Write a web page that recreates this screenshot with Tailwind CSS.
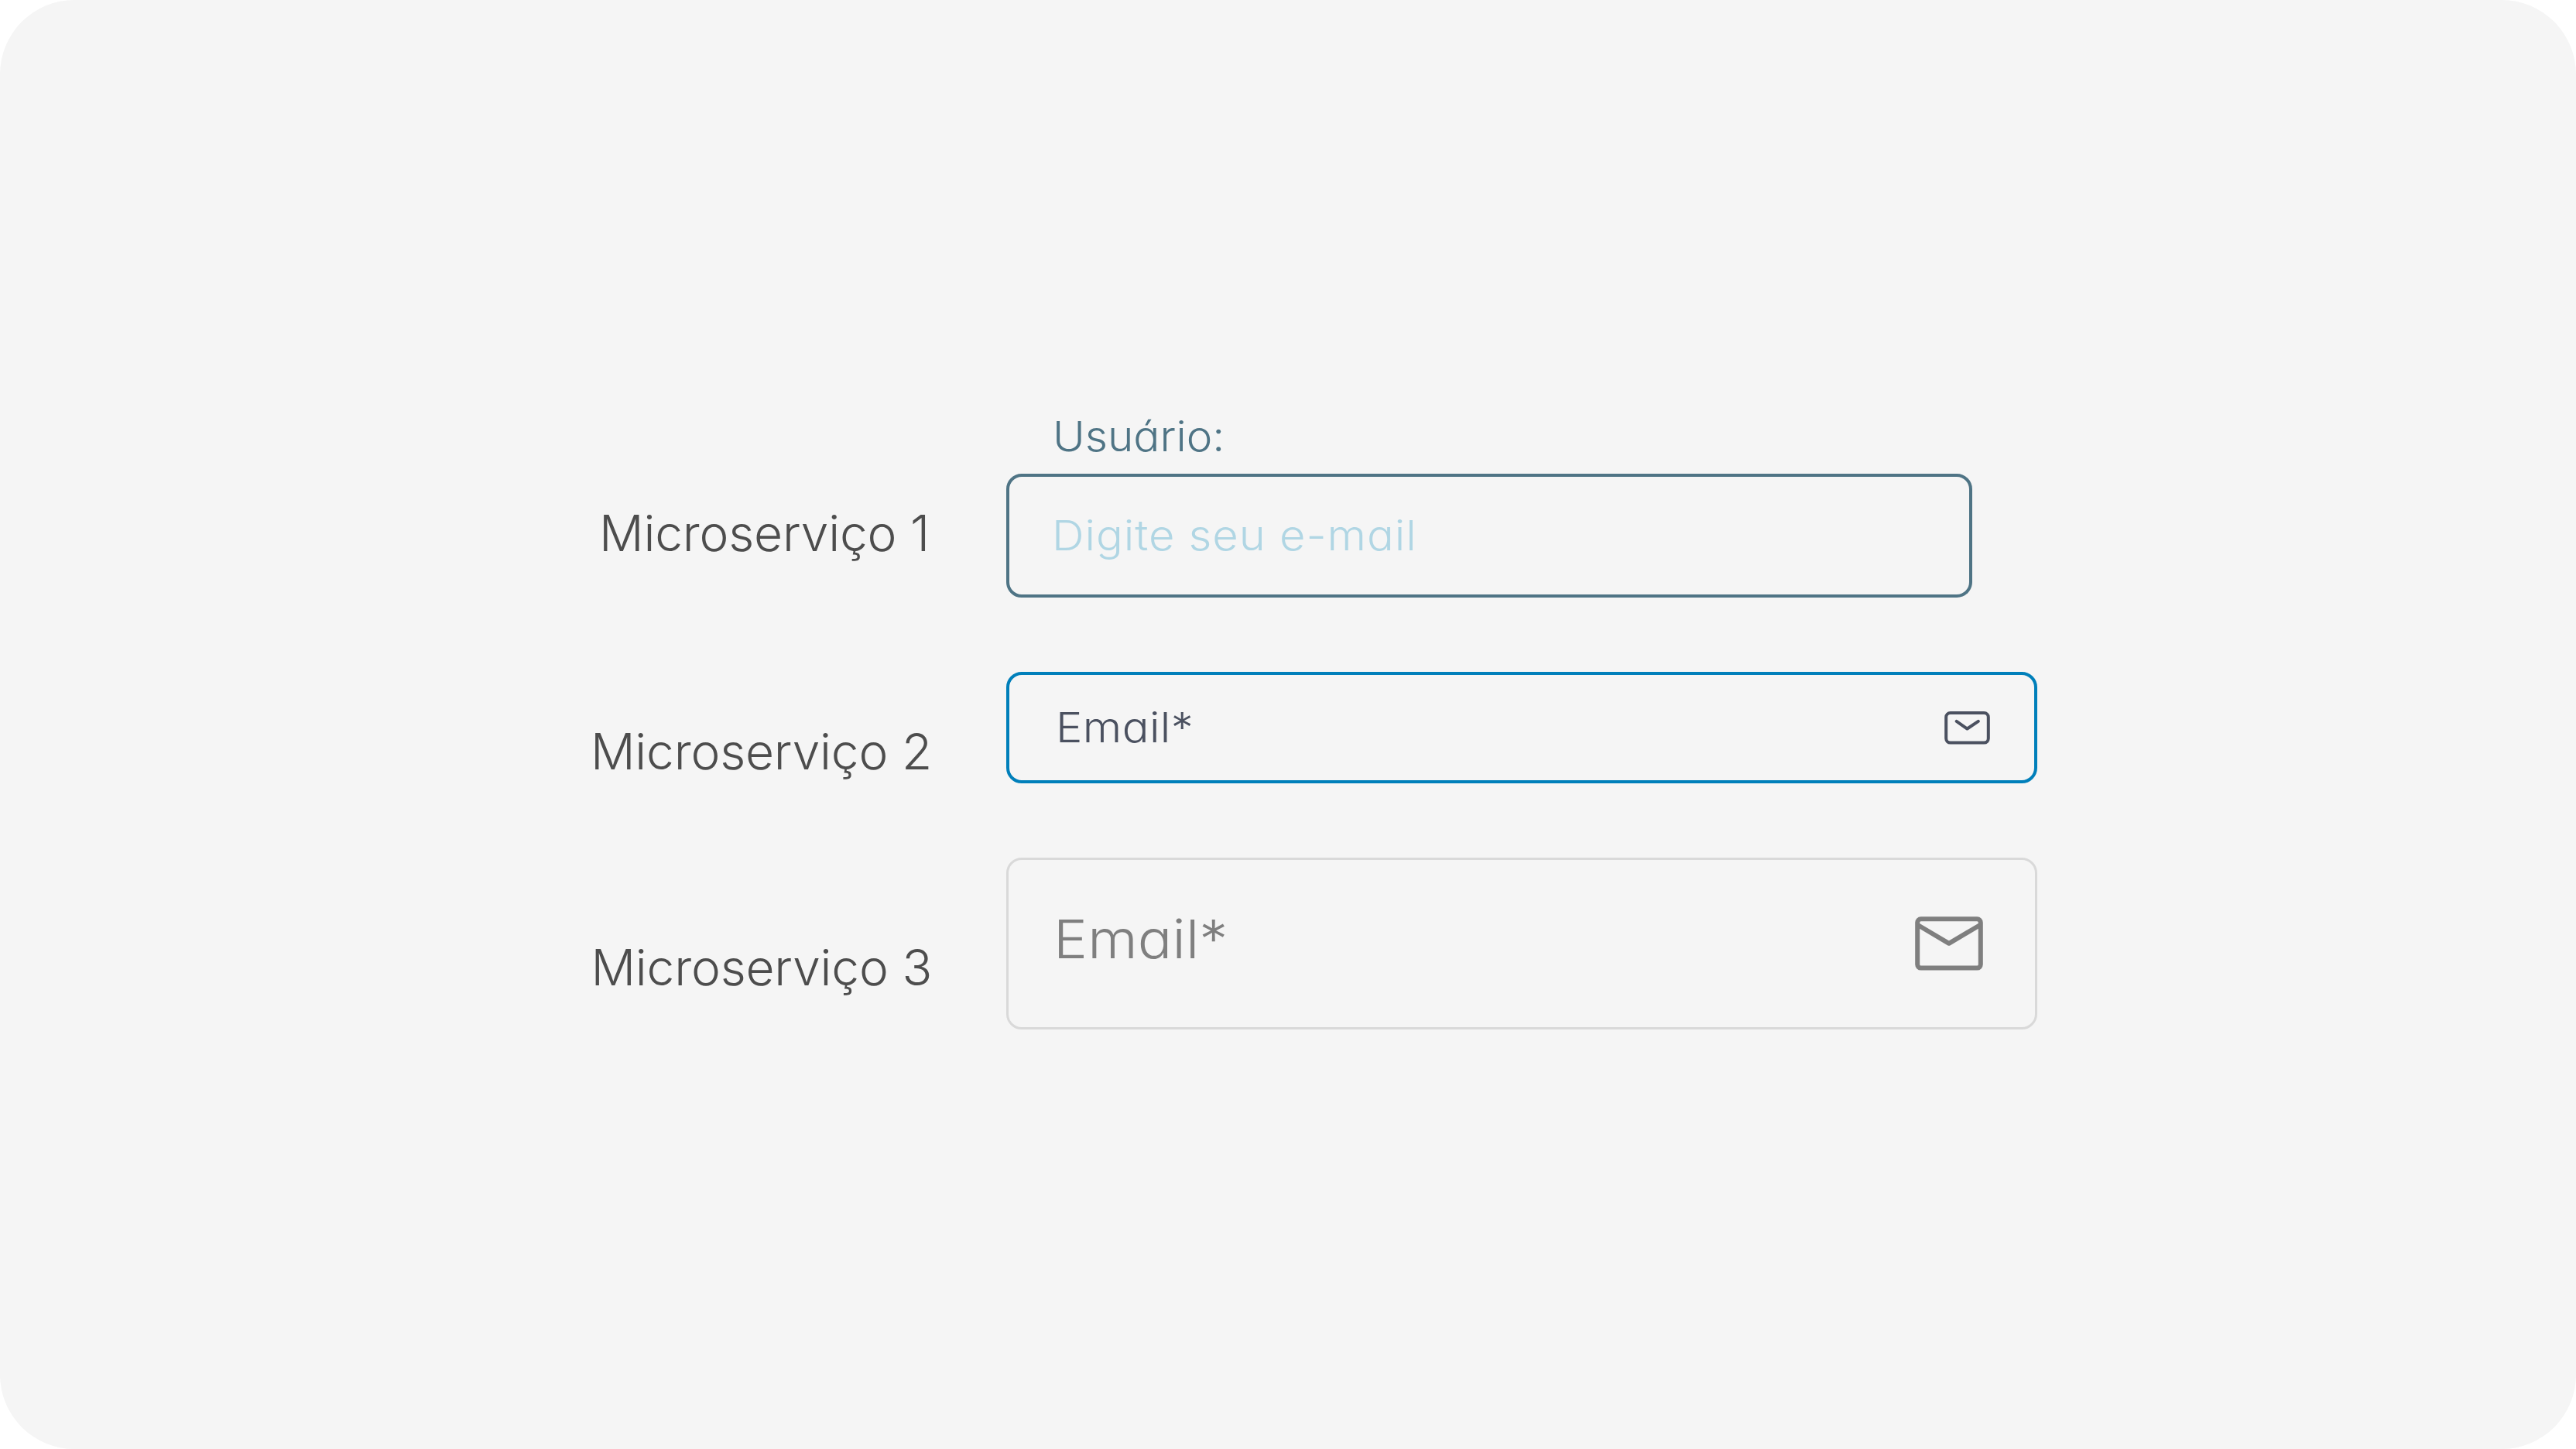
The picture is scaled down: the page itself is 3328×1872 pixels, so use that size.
<!DOCTYPE html>
<html lang="pt-BR">
<head>
  <meta charset="UTF-8" />
  <meta name="viewport" content="width=device-width, initial-scale=1.0"/>
  <title>Microserviços</title>
  <script src="https://cdn.jsdelivr.net/npm/@tailwindcss/browser@4"></script>
</head>
<body class="bg-white font-['Inter',sans-serif] font-light">
  <main class="h-[1872px] w-[3328px] rounded-[96px] bg-[#f5f5f5] pt-[524px]">

    <!-- Microserviço 1 -->
    <label for="usuario" class="ml-[1360px] block h-[88px] w-fit origin-left scale-x-[1.05] text-[54px] leading-[80px] text-[#4f7485] [font-feature-settings:'cv11']">Usuário:</label>
    <section class="flex gap-24">
      <h2 class="w-[1204px] pt-[37px] pr-[3px] text-right text-[64px] leading-[80px] tracking-[-0.2px] text-[#4d4d4d]">Microserviço 1</h2>
      <div id="usuario" class="flex h-[160px] w-[1248px] items-center rounded-[20px] border-4 border-[#4f7485] pl-[55px]">
        <span class="origin-left scale-x-[1.07] text-[54px] leading-[80px] tracking-[0.9px] text-[#b0d6e4] [font-feature-settings:'cv11']">Digite seu e-mail</span>
      </div>
    </section>

    <!-- Microserviço 2 -->
    <section class="mt-24 flex gap-24">
      <h2 class="w-[1204px] pt-[63px] text-right text-[64px] leading-[80px] tracking-[-0.2px] text-[#4d4d4d]">Microserviço 2</h2>
      <div class="flex h-[144px] w-[1332px] items-center justify-between rounded-[20px] border-4 border-[#007fba] pl-[60px] pr-[57px]">
        <span class="origin-left scale-x-[1.07] text-[54px] leading-[80px] tracking-[0.4px] text-[#4b5160] [font-feature-settings:'cv11']">Email*</span>
        <svg class="h-11 w-[59px]" viewBox="0 0 59 44" fill="none" stroke="#4b5160" stroke-width="4" stroke-linecap="round" stroke-linejoin="round">
          <rect x="2.2" y="3" width="54.6" height="38.6" rx="5.5" />
          <path d="M15.7 13.8 29.5 23.5 43.8 13.8" />
        </svg>
      </div>
    </section>

    <!-- Microserviço 3 -->
    <section class="mt-24 flex gap-24">
      <h2 class="w-[1204px] pt-[102px] text-right text-[64px] leading-[80px] tracking-[-0.2px] text-[#4d4d4d]">Microserviço 3</h2>
      <div class="flex h-[222px] w-[1332px] items-center justify-between rounded-[20px] border-[3px] border-[#d9d9d9] pl-[58px] pr-[67px]">
        <span class="origin-left scale-x-[1.07] pb-[13px] text-[69px] leading-[80px] tracking-[0.2px] text-[#7f7f7f] [font-feature-settings:'cv11']">Email*</span>
        <svg class="h-[70px] w-[88px]" viewBox="0 0 88 70" fill="none" stroke="#7f7f7f" stroke-width="6" stroke-linejoin="round">
          <rect x="3.2" y="3.2" width="81.6" height="63.4" rx="4.5" />
          <path d="M4.5 11.5 43.9 34.8 83.3 11.5" />
        </svg>
      </div>
    </section>

  </main>
</body>
</html>
